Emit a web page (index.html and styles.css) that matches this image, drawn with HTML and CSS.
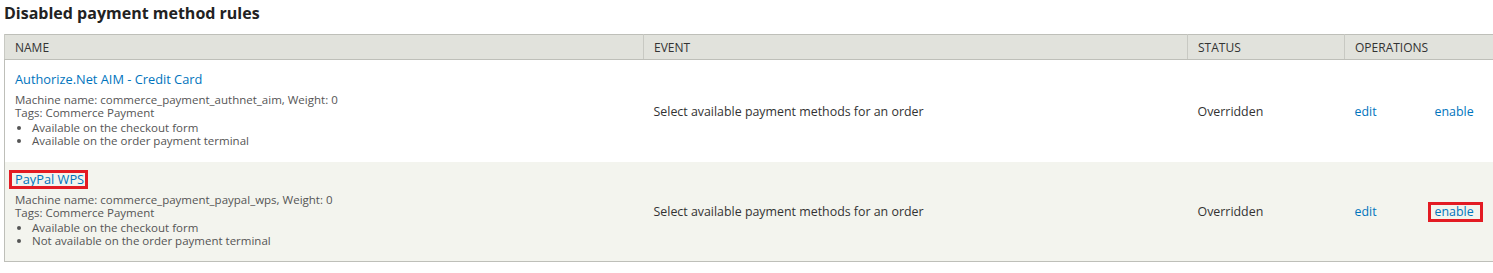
FILE: index.html
```html
<!DOCTYPE html>
<html lang="en">
<head>
    <meta charset="UTF-8">
    <title>Disabled payment method rules</title>
    <link rel="stylesheet" href="styles.css">
</head>
<body>
    <div class="page">
        <h2 class="title">Disabled payment method rules</h2>

        <table class="rules">
            <colgroup>
                <col class="col-name">
                <col class="col-event">
                <col class="col-status">
                <col class="col-edit">
                <col>
            </colgroup>
            <thead>
                <tr>
                    <th>Name</th>
                    <th>Event</th>
                    <th>Status</th>
                    <th colspan="2">Operations</th>
                </tr>
            </thead>
            <tbody>
                <tr class="odd">
                    <td>
                        <a href="#" class="rule-link">Authorize.Net AIM - Credit Card</a>
                        <div class="desc">
                            Machine name: commerce_payment_authnet_aim, Weight: 0<br>
                            Tags: Commerce Payment
                            <ul>
                                <li>Available on the checkout form</li>
                                <li>Available on the order payment terminal</li>
                            </ul>
                        </div>
                    </td>
                    <td>Select available payment methods for an order</td>
                    <td>Overridden</td>
                    <td><a href="#">edit</a></td>
                    <td><a href="#">enable</a></td>
                </tr>
                <tr class="even">
                    <td>
                        <a href="#" class="rule-link marked">PayPal WPS</a>
                        <div class="desc">
                            Machine name: commerce_payment_paypal_wps, Weight: 0<br>
                            Tags: Commerce Payment
                            <ul>
                                <li>Available on the checkout form</li>
                                <li>Not available on the order payment terminal</li>
                            </ul>
                        </div>
                    </td>
                    <td>Select available payment methods for an order</td>
                    <td>Overridden</td>
                    <td><a href="#">edit</a></td>
                    <td><a href="#" class="marked marked-op">enable</a></td>
                </tr>
            </tbody>
        </table>
    </div>
</body>
</html>
```

FILE: styles.css
```css
body {
    margin: 0;
    font-family: "Open Sans", Arial, sans-serif;
    font-size: 12.4px;
    color: #333;
    background-color: #fff;
    overflow: hidden;
}

.page {
    padding-left: 4px;
}

.title {
    margin: 0 0 10px;
    padding-top: 2px;
    font-size: 16px;
    line-height: 22px;
    font-weight: bold;
    color: #222;
}

a {
    color: #0074bd;
    text-decoration: none;
}

.rules {
    width: 1492px;
    border-collapse: collapse;
    table-layout: fixed;
    border: 1px solid #bebfb9;
}

.col-name {
    width: 639px;
}

.col-event {
    width: 544px;
}

.col-status {
    width: 157px;
}

.col-edit {
    width: 80px;
}

.rules th {
    height: 24px;
    padding: 0 10px;
    background-color: #e1e2dc;
    border-left: 1px solid #c8c9c3;
    border-bottom: 1px solid #bebfb9;
    text-align: left;
    font-size: 12px;
    font-weight: normal;
    text-transform: uppercase;
    color: #333;
}

.rules td {
    padding: 10px;
    vertical-align: middle;
}

.rules tr.odd {
    background-color: #fff;
}

.rules tr.even {
    background-color: #f3f4ee;
}

.rules tr.even td {
    padding-top: 9px;
    padding-bottom: 9px;
}

.rule-link {
    font-size: 12.8px;
    line-height: 18px;
}

.desc {
    margin-top: 5px;
    font-size: 11.5px;
    line-height: 13px;
    color: #555;
}

.desc ul {
    margin: 2px 0 5px;
    padding-left: 17px;
}

.desc li {
    line-height: 13px;
}

/* red annotation boxes */
.marked {
    display: inline-block;
    line-height: 13px;
    padding: 0 1px 0 3px;
    margin: 0 -1px 0 -3px;
    outline: 3px solid #e31b23;
}

.marked-op {
    line-height: 14px;
    padding: 0 6px 0 4px;
    margin: 0 -6px 0 -4px;
}
```
